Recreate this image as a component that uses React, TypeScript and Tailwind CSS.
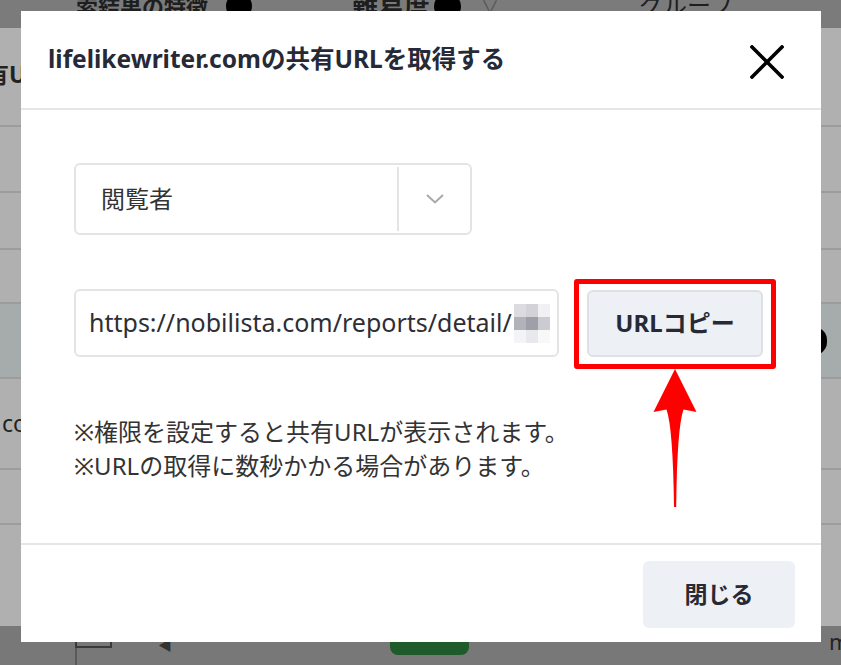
import React from 'react';

const CloseIcon: React.FC = () => (
    <svg width="34" height="34" viewBox="0 0 34 34" fill="none">
        <path d="M2 2 L32 32 M32 2 L2 32" stroke="#000" strokeWidth="3.6" strokeLinecap="square" />
    </svg>
);

const Chevron: React.FC = () => (
    <svg width="18" height="10" viewBox="0 0 18 10" fill="none">
        <path d="M1 1 L9 8.5 L17 1" stroke="#a9a9a9" strokeWidth="2" />
    </svg>
);

// blurred tail of the URL (mosaic)
const mosaic = [
    ['#dcdce0', '#d2d2d8', '#f1f1f3'],
    ['#b2b2ba', '#9f9faa', '#cbcbd1'],
    ['#f4f4f6', '#e9e9ed', '#f8f8f9'],
];

const App: React.FC = () => {
    return (
        <div className="relative w-[841px] h-[665px] overflow-hidden bg-[#b0b0b0] font-['Noto_Sans','Noto_Sans_CJK_JP',sans-serif]">
            {/* page behind the dim overlay */}
            <div className="flex flex-col h-full">
                <div className="h-[28px] shrink-0 bg-[#7b7b7b] flex items-start text-[22px] font-bold text-[#1e1e1e] leading-none overflow-hidden">
                    <div className="flex items-center gap-[18px] ml-[76px] -mt-[7px]">
                        <span>索結果の特徴</span>
                        <span className="w-[26px] h-[26px] rounded-full bg-black"></span>
                    </div>
                    <div className="flex items-center ml-[100px] -mt-[7px]">
                        <span className="text-[26px]">難易度</span>
                        <span className="ml-[4px] w-[27px] h-[27px] rounded-full bg-black"></span>
                        <span className="ml-[20px] text-[#555] font-normal text-[18px]">∨</span>
                    </div>
                    <span className="ml-[140px] -mt-[7px] font-normal text-[24px]">グループ</span>
                </div>
                <div className="h-[99px] shrink-0 border-b-2 border-[#9c9c9c] flex items-center">
                    <div className="w-[21px] overflow-hidden">
                        <span className="block -ml-[37px] mt-[-4px] text-[23px] font-bold text-[#222] whitespace-nowrap">共有URL</span>
                    </div>
                </div>
                <div className="h-[66px] shrink-0 border-b-2 border-[#9c9c9c]"></div>
                <div className="h-[57px] shrink-0 border-b-2 border-[#9c9c9c]"></div>
                <div className="h-[54px] shrink-0 border-b-2 border-[#9c9c9c]"></div>
                <div className="h-[75px] shrink-0 bg-[#a6acac] border-b-2 border-[#9c9c9c] flex items-center justify-end">
                    <span className="w-[26px] h-[28px] rounded-full bg-black mr-[14px]"></span>
                </div>
                <div className="h-[91px] shrink-0 border-b-2 border-[#9c9c9c] flex items-center">
                    <div className="w-[21px] overflow-hidden">
                        <span className="block ml-[2px] text-[23px] text-[#222] whitespace-nowrap">com</span>
                    </div>
                </div>
                <div className="h-[55px] shrink-0 border-b-2 border-[#9c9c9c]"></div>
                <div className="h-[101px] shrink-0"></div>
                <div className="flex-1 bg-[#787878] flex items-start">
                    <div className="ml-[75px] self-stretch flex flex-col">
                        <span className="mt-[4px] w-[37px] h-[18px] border-2 border-[#3a3a3a]"></span>
                        <span className="flex-1 w-[2px] bg-[#5a5a5a]"></span>
                    </div>
                    <span className="ml-[46px] mt-[12px] text-[14px] text-[#333] leading-none">◀</span>
                    <span className="ml-[218px] w-[79px] h-[29px] rounded-b-[8px] bg-[#1e5a2a]"></span>
                    <div className="ml-auto w-[12px] overflow-hidden">
                        <span className="block mt-[4px] text-[22px] leading-none text-[#222]">m</span>
                    </div>
                </div>
            </div>

            {/* modal */}
            <div className="absolute left-[21px] top-[11px] w-[800px] h-[631px] bg-white flex flex-col">
                <header className="h-[99px] shrink-0 border-b-2 border-[#e6e6e6] flex items-center justify-between pl-[27px] pr-[37px]">
                    <h2 className="text-[24.5px] font-bold text-[#262a36]">lifelikewriter.comの共有URLを取得する</h2>
                    <button className="pt-[4px]" aria-label="close"><CloseIcon /></button>
                </header>

                <div className="flex-1 px-[53px] pt-[53px] flex flex-col">
                    <div className="w-[398px] h-[72px] border-2 border-[#e4e4e4] rounded-[6px] flex items-stretch">
                        <div className="flex-1 flex items-center pl-[25px] text-[24px] text-[#333]">閲覧者</div>
                        <div className="w-[2px] my-[2px] bg-[#e4e4e4]"></div>
                        <div className="w-[71px] flex items-center justify-center"><Chevron /></div>
                    </div>

                    <div className="mt-[54px] flex items-center gap-[28px]">
                        <div className="w-[485px] h-[68px] border-2 border-[#e4e4e4] rounded-[6px] flex items-center pl-[13px] overflow-hidden">
                            <span className="text-[25px] text-[#2e2e36] whitespace-nowrap">https://nobilista.com/reports/detail/</span>
                            <div className="ml-[2px] grid grid-cols-3">
                                {mosaic.flat().map((c, i) => (
                                    <div key={i} className="w-[12px] h-[13px]" style={{ background: c }}></div>
                                ))}
                            </div>
                        </div>
                        <div className="relative">
                            <button className="w-[176px] h-[67px] rounded-[6px] bg-[#edf0f4] border-2 border-[#dde1e6] text-[24px] font-bold text-[#262a36]">URLコピー</button>
                            <div className="absolute -left-[13px] -top-[11px] -right-[13px] -bottom-[12px] border-[5px] border-[#ff0000] rounded-[3px]"></div>
                        </div>
                    </div>

                    <div className="mt-[58px] text-[24px] leading-[34px] text-[#333]">
                        <p>※権限を設定すると共有URLが表示されます。</p>
                        <p>※URLの取得に数秒かかる場合があります。</p>
                    </div>
                </div>

                <footer className="h-[99px] shrink-0 border-t-2 border-[#e6e6e6] flex items-start justify-end pt-[16px] pr-[26px]">
                    <button className="w-[152px] h-[67px] rounded-[6px] bg-[#edf0f4] text-[23px] font-bold text-[#262a36]">閉じる</button>
                </footer>
            </div>

            {/* annotation arrow */}
            <svg className="absolute left-[653px] top-[368px]" width="44" height="142" viewBox="0 0 44 142">
                <path d="M22 1 L43.5 44 L30.5 41.5 Q24 60 23.2 139 L21 139 Q20 60 13.5 41.5 L0.5 44 Z" fill="#ff0000" />
            </svg>
        </div>
    );
};

export default App;
